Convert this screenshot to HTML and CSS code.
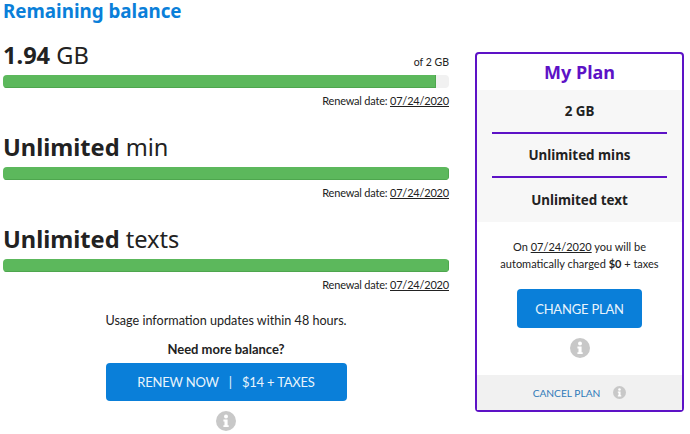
FILE: index.html
```html
<!DOCTYPE html>
<html lang="en">
<head>
<meta charset="utf-8">
<title>Remaining balance</title>
<link rel="stylesheet" href="styles.css">
</head>
<body>
<svg class="defs" width="0" height="0" aria-hidden="true"><symbol id="info" viewBox="0 0 20 20"><circle cx="10" cy="10" r="10" fill="#c8c8c8"/><circle cx="10" cy="5.4" r="2" fill="#fff"/><path d="M7.4 8.6h4.2v5.6h1.1v1.9H7.4v-1.9h1.1v-3.7H7.4z" fill="#fff"/></symbol></svg>
<div class="page">
  <main class="balance">
    <h1 class="heading">Remaining balance</h1>
    <section class="usage usage-first">
      <div class="usage-head"><div class="amount"><b>1.94</b> GB</div><div class="of">of 2 GB</div></div>
      <div class="bar"><div class="fill" style="width:97%"></div></div>
      <div class="renewal">Renewal date: <u>07/24/2020</u></div>
    </section>
    <section class="usage">
      <div class="usage-head"><div class="amount"><b>Unlimited</b> min</div></div>
      <div class="bar"><div class="fill" style="width:100%"></div></div>
      <div class="renewal">Renewal date: <u>07/24/2020</u></div>
    </section>
    <section class="usage">
      <div class="usage-head"><div class="amount"><b>Unlimited</b> texts</div></div>
      <div class="bar"><div class="fill" style="width:100%"></div></div>
      <div class="renewal">Renewal date: <u>07/24/2020</u></div>
    </section>
    <div class="renew">
      <p class="updates">Usage information updates within 48 hours.</p>
      <p class="need">Need more balance?</p>
      <a class="btn btn-wide"><span>RENEW NOW</span><span class="sep">|</span><span>$14 + TAXES</span></a>
      <svg class="icon-lg"><use href="#info"/></svg>
    </div>
  </main>
  <aside class="plan">
    <h2 class="plan-title">My Plan</h2>
    <div class="plan-items">
      <div class="plan-item">2 GB</div>
      <div class="plan-item">Unlimited mins</div>
      <div class="plan-item">Unlimited text</div>
    </div>
    <div class="plan-body">
      <p class="charge">On <u>07/24/2020</u> you will be<br>automatically charged <b>$0</b> + taxes</p>
      <a class="btn btn-plan">CHANGE PLAN</a>
      <svg class="icon-lg"><use href="#info"/></svg>
    </div>
    <div class="plan-foot"><a class="cancel">CANCEL PLAN</a><svg class="icon-sm"><use href="#info"/></svg></div>
  </aside>
</div>
</body>
</html>
```
FILE: styles.css
```css
* { box-sizing: border-box; }
html, body { margin: 0; padding: 0; background: #fff; }
body { font-family: Lato, "Noto Sans", sans-serif; color: #222; height: 434px; overflow: hidden; }
.defs { position: absolute; }
.page { display: flex; align-items: flex-start; gap: 26px; padding: 0 5px 0 3px; }
.balance { width: 446px; flex: none; }
.heading { margin: 0; font-family: "Noto Sans", sans-serif; font-size: 18.8px; line-height: 23px; font-weight: 700; color: #0a7fd9; }
.usage { margin-top: 24px; }
.usage-first { margin-top: 18px; }
.usage-head { display: flex; justify-content: space-between; align-items: flex-end; height: 34px; }
.amount { font-family: "Noto Sans", sans-serif; font-size: 23.6px; line-height: 30px; margin-bottom: 5px; }
.amount b { font-weight: 700; }
.of { font-size: 10.5px; line-height: 16px; margin-bottom: 5px; }
.bar { height: 13px; background: #f1f1f1; border-radius: 4px; overflow: hidden; }
.fill { height: 100%; background: #5cb85c; border-bottom: 1px solid #4ea64e; border-right: 1px solid #4ea64e; }
.renewal { text-align: right; font-size: 11px; letter-spacing: -0.2px; line-height: 17px; margin-top: 4px; }
.renew { display: flex; flex-direction: column; align-items: center; margin-top: 19px; }
.updates { margin: 0; font-size: 12.6px; line-height: 18px; }
.need { margin: 10px 0 0; font-size: 13px; line-height: 18px; font-weight: 700; }
.btn { display: flex; align-items: center; justify-content: center; background: #0a7fd9; color: #e8f4fc; border-radius: 4px; font-size: 13px; letter-spacing: -0.2px; }
.btn-wide { width: 241px; height: 38px; margin-top: 5px; }
.sep { margin: 0 10px; }
.icon-lg { width: 20px; height: 20px; margin-top: 10px; display: block; }
.plan { width: 209px; flex: none; height: 360px; margin-top: 52px; border: 2px solid #5d12c6; border-radius: 4px; display: flex; flex-direction: column; }
.plan-title { margin: 0; height: 36px; font-family: "Noto Sans", sans-serif; font-size: 18px; line-height: 36px; text-align: center; color: #5d12c6; font-weight: 700; }
.plan-items { background: #f7f7f7; padding: 0 15px; }
.plan-item { height: 44px; display: flex; align-items: center; justify-content: center; font-family: "Noto Sans", sans-serif; font-size: 13.4px; font-weight: 700; border-bottom: 2px solid #5d12c6; }
.plan-item:last-child { border-bottom: 0; }
.plan-body { flex: 1; display: flex; flex-direction: column; align-items: center; padding-top: 16px; }
.charge { margin: 0; text-align: center; font-size: 11px; line-height: 17px; }
.btn-plan { width: 125px; height: 39px; margin-top: 17px; }
.plan-foot { height: 35px; background: #f1f1f1; display: flex; align-items: center; justify-content: center; gap: 13px; }
.cancel { font-size: 10.2px; color: #2f7ab9; }
.icon-sm { width: 13px; height: 13px; display: block; }
```
